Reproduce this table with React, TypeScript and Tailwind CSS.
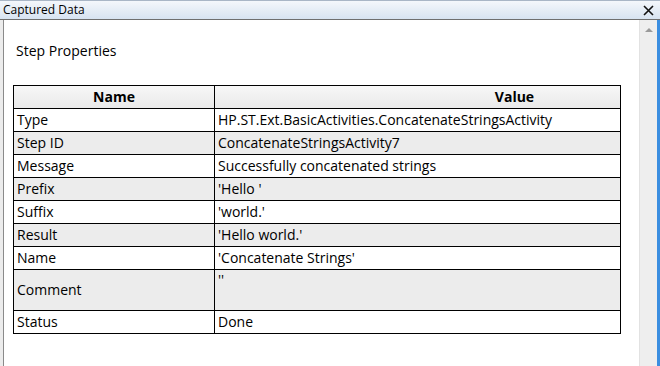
import React from "react";

const rows: { name: string; value: string; tall?: boolean }[] = [
  { name: "Type", value: "HP.ST.Ext.BasicActivities.ConcatenateStringsActivity" },
  { name: "Step ID", value: "ConcatenateStringsActivity7" },
  { name: "Message", value: "Successfully concatenated strings" },
  { name: "Prefix", value: "'Hello '" },
  { name: "Suffix", value: "'world.'" },
  { name: "Result", value: "'Hello world.'" },
  { name: "Name", value: "'Concatenate Strings'" },
  { name: "Comment", value: "''", tall: true },
  { name: "Status", value: "Done" },
];

export default function App() {
  return (
    <div
      className="w-[660px] h-[366px] flex flex-col bg-white overflow-hidden text-black"
      style={{ fontFamily: '"Segoe UI", "Open Sans", "Noto Sans", sans-serif' }}
    >
      <div className="h-[20px] flex items-center justify-between border-b border-[#6f6f6f] bg-gradient-to-b from-[#f4f7fb] to-[#d7e3f1] border-t border-t-[#a9b6c6] pr-[6px]">
        <span className="text-[12px] pl-[3px] leading-none">Captured Data</span>
        <svg width="11" height="11" viewBox="0 0 11 11">
          <path d="M1 1 L10 10 M10 1 L1 10" stroke="#111" strokeWidth="1.6" />
        </svg>
      </div>
      <div className="flex-1 flex min-h-0">
        <div className="w-[3px] bg-[#ececec]" />
        <div className="w-[1px] bg-[#8a8a8a]" />
        <div className="flex-1 flex flex-col pl-[9px]">
          <div className="text-[14px] pt-[21px] pl-[3px] h-[65px] leading-[20px]">Step Properties</div>
          <table className="w-[608px] border-collapse text-[14px] border border-black">
            <thead>
              <tr className="h-[23px] bg-gradient-to-b from-[#f7f7f7] to-[#e9e9e9]">
                <th className="w-[201px] border border-black font-bold text-center p-0 leading-none">Name</th>
                <th className="border border-black font-bold text-center p-0 pl-[194px] leading-none">Value</th>
              </tr>
            </thead>
            <tbody>
              {rows.map((r, i) => (
                <tr
                  key={r.name}
                  className={`${r.tall ? "h-[41px]" : "h-[23px]"} ${i % 2 === 1 ? "bg-[#ececec]" : "bg-white"}`}
                >
                  <td className="border border-black px-[3px] py-0 leading-none">{r.name}</td>
                  <td className={`border border-black px-[3px] py-0 leading-none ${r.tall ? "align-top pt-[3px]" : ""}`}>
                    {r.value}
                  </td>
                </tr>
              ))}
            </tbody>
          </table>
        </div>
        <div className="w-[18px] bg-[#eeeeee] border-l border-[#e2e2e2] flex justify-center pt-[7px]">
          <svg width="8" height="5" viewBox="0 0 8 5">
            <path d="M0 5 L4 1 L8 5 Z" fill="#9a9a9a" />
          </svg>
        </div>
        <div className="w-[3px] bg-[#3b8ee0]" />
      </div>
    </div>
  );
}
